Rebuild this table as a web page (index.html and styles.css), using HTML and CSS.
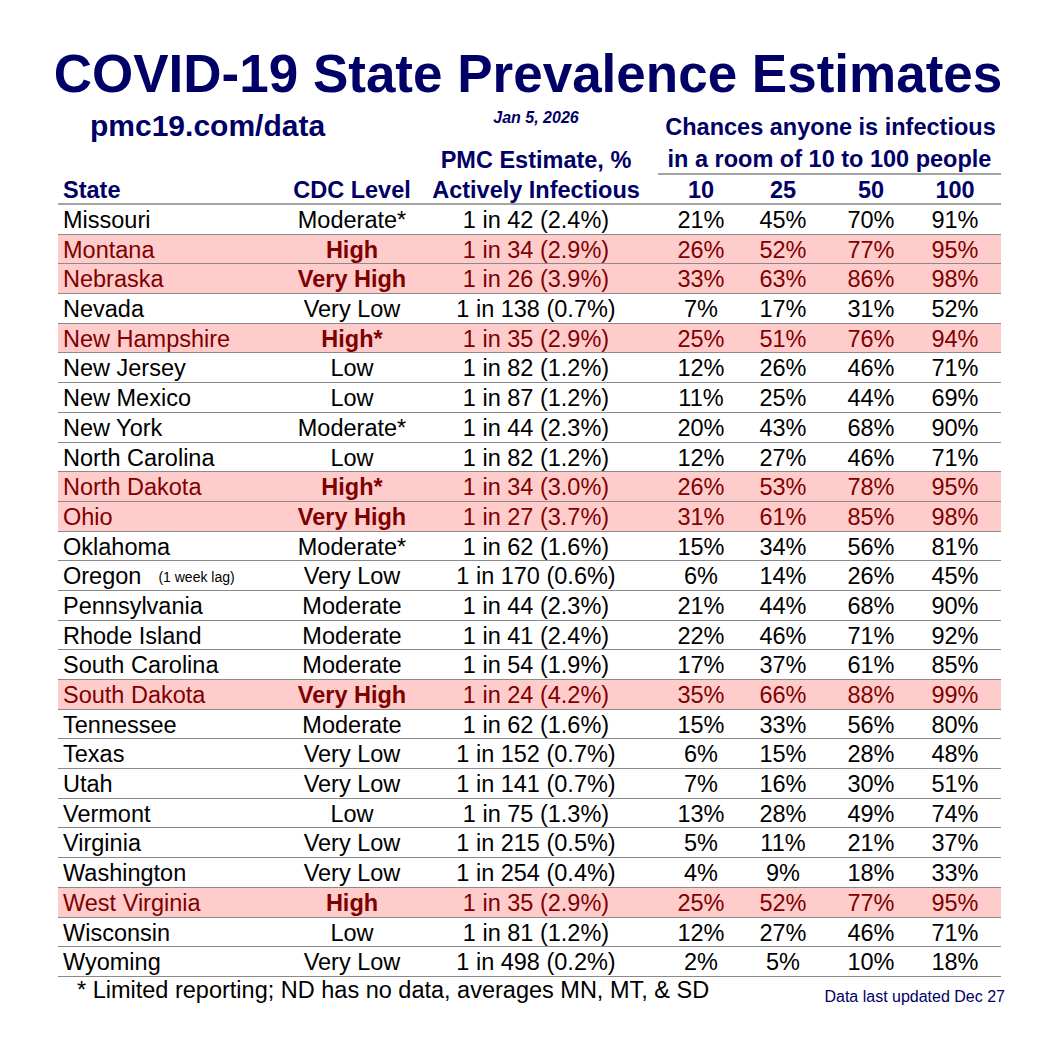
FILE: index.html
```html
<!DOCTYPE html>
<html lang="en">
<head>
<meta charset="utf-8">
<title>COVID-19 State Prevalence Estimates</title>
<link rel="stylesheet" href="styles.css">
</head>
<body>
<div class="page">
  <h1 class="title">COVID-19 State Prevalence Estimates</h1>
  <div class="sheet">
    <div class="row head-a">
      <div class="site">pmc19.com/data</div>
      <div class="date">Jan 5, 2026</div>
      <div class="chances">Chances anyone is infectious</div>
    </div>
    <div class="row head-b">
      <div class="blank"></div>
      <div class="pmc">PMC Estimate, %</div>
      <div class="room">in a room of 10 to 100 people</div>
    </div>
    <div class="row head-c">
      <div class="c-state">State</div>
      <div>CDC Level</div>
      <div>Actively Infectious</div>
      <div>10</div>
      <div>25</div>
      <div>50</div>
      <div class="c-last">100</div>
    </div>

    <div class="row data"><div class="c-state">Missouri</div><div>Moderate*</div><div>1 in 42 (2.4%)</div><div>21%</div><div>45%</div><div>70%</div><div class="c-last">91%</div></div>
    <div class="row data hot"><div class="c-state">Montana</div><div class="lvl">High</div><div>1 in 34 (2.9%)</div><div>26%</div><div>52%</div><div>77%</div><div class="c-last">95%</div></div>
    <div class="row data hot"><div class="c-state">Nebraska</div><div class="lvl">Very High</div><div>1 in 26 (3.9%)</div><div>33%</div><div>63%</div><div>86%</div><div class="c-last">98%</div></div>
    <div class="row data"><div class="c-state">Nevada</div><div>Very Low</div><div>1 in 138 (0.7%)</div><div>7%</div><div>17%</div><div>31%</div><div class="c-last">52%</div></div>
    <div class="row data hot"><div class="c-state">New Hampshire</div><div class="lvl">High*</div><div>1 in 35 (2.9%)</div><div>25%</div><div>51%</div><div>76%</div><div class="c-last">94%</div></div>
    <div class="row data"><div class="c-state">New Jersey</div><div>Low</div><div>1 in 82 (1.2%)</div><div>12%</div><div>26%</div><div>46%</div><div class="c-last">71%</div></div>
    <div class="row data"><div class="c-state">New Mexico</div><div>Low</div><div>1 in 87 (1.2%)</div><div>11%</div><div>25%</div><div>44%</div><div class="c-last">69%</div></div>
    <div class="row data"><div class="c-state">New York</div><div>Moderate*</div><div>1 in 44 (2.3%)</div><div>20%</div><div>43%</div><div>68%</div><div class="c-last">90%</div></div>
    <div class="row data"><div class="c-state">North Carolina</div><div>Low</div><div>1 in 82 (1.2%)</div><div>12%</div><div>27%</div><div>46%</div><div class="c-last">71%</div></div>
    <div class="row data hot"><div class="c-state">North Dakota</div><div class="lvl">High*</div><div>1 in 34 (3.0%)</div><div>26%</div><div>53%</div><div>78%</div><div class="c-last">95%</div></div>
    <div class="row data hot"><div class="c-state">Ohio</div><div class="lvl">Very High</div><div>1 in 27 (3.7%)</div><div>31%</div><div>61%</div><div>85%</div><div class="c-last">98%</div></div>
    <div class="row data"><div class="c-state">Oklahoma</div><div>Moderate*</div><div>1 in 62 (1.6%)</div><div>15%</div><div>34%</div><div>56%</div><div class="c-last">81%</div></div>
    <div class="row data"><div class="c-state">Oregon<span class="lag">(1 week lag)</span></div><div>Very Low</div><div>1 in 170 (0.6%)</div><div>6%</div><div>14%</div><div>26%</div><div class="c-last">45%</div></div>
    <div class="row data"><div class="c-state">Pennsylvania</div><div>Moderate</div><div>1 in 44 (2.3%)</div><div>21%</div><div>44%</div><div>68%</div><div class="c-last">90%</div></div>
    <div class="row data"><div class="c-state">Rhode Island</div><div>Moderate</div><div>1 in 41 (2.4%)</div><div>22%</div><div>46%</div><div>71%</div><div class="c-last">92%</div></div>
    <div class="row data"><div class="c-state">South Carolina</div><div>Moderate</div><div>1 in 54 (1.9%)</div><div>17%</div><div>37%</div><div>61%</div><div class="c-last">85%</div></div>
    <div class="row data hot"><div class="c-state">South Dakota</div><div class="lvl">Very High</div><div>1 in 24 (4.2%)</div><div>35%</div><div>66%</div><div>88%</div><div class="c-last">99%</div></div>
    <div class="row data"><div class="c-state">Tennessee</div><div>Moderate</div><div>1 in 62 (1.6%)</div><div>15%</div><div>33%</div><div>56%</div><div class="c-last">80%</div></div>
    <div class="row data"><div class="c-state">Texas</div><div>Very Low</div><div>1 in 152 (0.7%)</div><div>6%</div><div>15%</div><div>28%</div><div class="c-last">48%</div></div>
    <div class="row data"><div class="c-state">Utah</div><div>Very Low</div><div>1 in 141 (0.7%)</div><div>7%</div><div>16%</div><div>30%</div><div class="c-last">51%</div></div>
    <div class="row data"><div class="c-state">Vermont</div><div>Low</div><div>1 in 75 (1.3%)</div><div>13%</div><div>28%</div><div>49%</div><div class="c-last">74%</div></div>
    <div class="row data"><div class="c-state">Virginia</div><div>Very Low</div><div>1 in 215 (0.5%)</div><div>5%</div><div>11%</div><div>21%</div><div class="c-last">37%</div></div>
    <div class="row data"><div class="c-state">Washington</div><div>Very Low</div><div>1 in 254 (0.4%)</div><div>4%</div><div>9%</div><div>18%</div><div class="c-last">33%</div></div>
    <div class="row data hot"><div class="c-state">West Virginia</div><div class="lvl">High</div><div>1 in 35 (2.9%)</div><div>25%</div><div>52%</div><div>77%</div><div class="c-last">95%</div></div>
    <div class="row data"><div class="c-state">Wisconsin</div><div>Low</div><div>1 in 81 (1.2%)</div><div>12%</div><div>27%</div><div>46%</div><div class="c-last">71%</div></div>
    <div class="row data"><div class="c-state">Wyoming</div><div>Very Low</div><div>1 in 498 (0.2%)</div><div>2%</div><div>5%</div><div>10%</div><div class="c-last">18%</div></div>
  </div>
  <div class="footer">
    <div class="note">* Limited reporting; ND has no data, averages MN, MT, &amp; SD</div>
    <div class="updated">Data last updated Dec 27</div>
  </div>
</div>
</body>
</html>
```

FILE: styles.css
```css
* { box-sizing: border-box; }
html, body { margin: 0; padding: 0; background: #ffffff; }
body { font-family: "Liberation Sans", Arial, sans-serif; color: #000; }

.page { width: 1056px; height: 1056px; padding-top: 47px; }

.title {
  margin: 0;
  font-size: 53px;
  line-height: 53px;
  font-weight: 700;
  color: #000066;
  text-align: center;
  height: 57px;
}

.sheet { margin-left: 58px; width: 943px; }

.row {
  display: grid;
  grid-template-columns: 234px 120px 248px 82px 82px 94px 83px;
  text-align: center;
  white-space: nowrap;
}

.head-a, .head-b, .head-c { color: #000066; font-weight: 700; font-size: 23.5px; }
.head-a { height: 37px; }
.head-a .site {
  grid-column: 1 / span 2;
  text-align: left;
  padding-left: 32px;
  font-size: 30px;
  line-height: 43px;
}
.head-a .date {
  font-size: 16px;
  line-height: 27px;
  font-style: italic;
}
.head-a .chances {
  grid-column: 4 / span 4;
  line-height: 47px;
}

.head-b { height: 33px; }
.head-b .blank { grid-column: 1 / span 2; }
.head-b .pmc { line-height: 38px; }
.head-b .room {
  grid-column: 4 / span 4;
  line-height: 37px;
  height: 34px;
  margin-left: -2px;
  border-bottom: 2px solid #a3a3a3;
}

.head-c { height: 31px; }
.head-c > div {
  border-bottom: 2px solid #a3a3a3;
  padding-top: 3px;
  line-height: 26px;
}

.c-state { text-align: left; padding-left: 5px; }
.c-last { padding-right: 9px; }

.data {
  height: 29.7px;
  font-size: 23.5px;
  border-bottom: 1px solid #8a8a8a;
}
.data > div { padding-top: 3px; line-height: 25.7px; }

.hot { background: #ffcccc; color: #800000; }
.hot .lvl { font-weight: 700; }

.lag { font-size: 14px; margin-left: 17px; vertical-align: 2px; }

.footer {
  display: flex;
  justify-content: space-between;
  align-items: flex-start;
  margin-left: 58px;
  width: 947px;
}
.note { font-size: 23.5px; line-height: 27px; padding-left: 19px; }
.updated { font-size: 16px; line-height: 40px; color: #000066; }
```
